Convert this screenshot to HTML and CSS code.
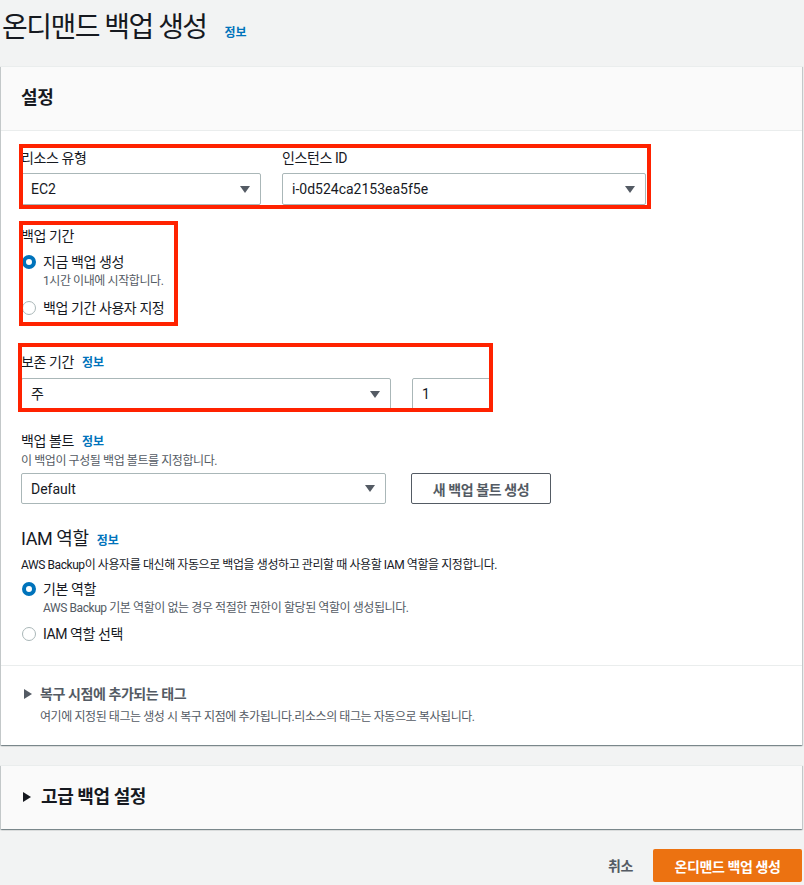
FILE: index.html
```html
<!DOCTYPE html>
<html lang="ko">
<head>
    <meta charset="utf-8">
    <meta name="viewport" content="width=device-width, initial-scale=1">
    <title>온디맨드 백업 생성</title>
    <link rel="stylesheet" href="styles.css">
</head>
<body>
<div class="page">

    <div class="page_header">
        <h1>온디맨드 백업 생성</h1>
        <a class="info" href="#">정보</a>
    </div>

    <div class="panel">
        <div class="panel_header">
            <h2>설정</h2>
        </div>

        <div class="panel_body">
            <div class="field_row">
                <div class="field field-type">
                    <div class="field_label">리소스 유형</div>
                    <div class="select">
                        <span>EC2</span>
                        <svg class="caret" width="10" height="7" viewBox="0 0 10 7"><path d="M0 0h10L5 7z"/></svg>
                    </div>
                </div>
                <div class="field field-instance">
                    <div class="field_label">인스턴스 ID</div>
                    <div class="select">
                        <span>i-0d524ca2153ea5f5e</span>
                        <svg class="caret" width="10" height="7" viewBox="0 0 10 7"><path d="M0 0h10L5 7z"/></svg>
                    </div>
                </div>
            </div>

            <div class="group group-period">
                <div class="field_label">백업 기간</div>
                <div class="radio">
                    <span class="dot checked"></span>
                    <div>
                        <div class="radio_label">지금 백업 생성</div>
                        <div class="radio_desc">1시간 이내에 시작합니다.</div>
                    </div>
                </div>
                <div class="radio radio-next">
                    <span class="dot"></span>
                    <div class="radio_label">백업 기간 사용자 지정</div>
                </div>
            </div>

            <div class="group group-retention">
                <div class="field_label">보존 기간 <a class="info" href="#">정보</a></div>
                <div class="field_row">
                    <div class="select select-unit">
                        <span>주</span>
                        <svg class="caret" width="10" height="7" viewBox="0 0 10 7"><path d="M0 0h10L5 7z"/></svg>
                    </div>
                    <div class="input">1</div>
                </div>
            </div>

            <div class="group group-vault">
                <div class="field_label">백업 볼트 <a class="info" href="#">정보</a></div>
                <div class="field_desc">이 백업이 구성될 백업 볼트를 지정합니다.</div>
                <div class="field_row vault_row">
                    <div class="select select-vault">
                        <span>Default</span>
                        <svg class="caret" width="10" height="7" viewBox="0 0 10 7"><path d="M0 0h10L5 7z"/></svg>
                    </div>
                    <button class="btn">새 백업 볼트 생성</button>
                </div>
            </div>

            <div class="group group-iam">
                <h3>IAM 역할 <a class="info" href="#">정보</a></h3>
                <div class="field_desc">AWS Backup이 사용자를 대신해 자동으로 백업을 생성하고 관리할 때 사용할 IAM 역할을 지정합니다.</div>
                <div class="radio radio-first">
                    <span class="dot checked"></span>
                    <div>
                        <div class="radio_label">기본 역할</div>
                        <div class="radio_desc">AWS Backup 기본 역할이 없는 경우 적절한 권한이 할당된 역할이 생성됩니다.</div>
                    </div>
                </div>
                <div class="radio radio-last">
                    <span class="dot"></span>
                    <div class="radio_label">IAM 역할 선택</div>
                </div>
            </div>

            <!-- highlight boxes drawn over the form -->
            <div class="annot annot-1"></div>
            <div class="annot annot-2"></div>
            <div class="annot annot-3"></div>
        </div>

        <div class="expand">
            <div class="expand_title">
                <svg class="arrow" width="8" height="10" viewBox="0 0 8 10"><path d="M0 0l8 5-8 5z"/></svg>
                복구 시점에 추가되는 태그
            </div>
            <div class="expand_desc">여기에 지정된 태그는 생성 시 복구 지점에 추가됩니다.리소스의 태그는 자동으로 복사됩니다.</div>
        </div>
    </div>

    <div class="panel panel-advanced">
        <div class="panel_header">
            <h2>
                <svg class="arrow" width="8" height="10" viewBox="0 0 8 10"><path d="M0 0l8 5-8 5z"/></svg>
                고급 백업 설정
            </h2>
        </div>
    </div>

    <div class="actions">
        <a class="link_btn" href="#">취소</a>
        <button class="btn btn-primary">온디맨드 백업 생성</button>
    </div>

</div>
</body>
</html>
```

FILE: styles.css
```css
html, body {
    overflow: hidden;
}

body {
    margin: 0;
    font-family: Roboto, "Noto Sans CJK KR", sans-serif;
    font-size: 14px;
    line-height: 22px;
    color: #16191f;
    background-color: #f2f3f3;
    letter-spacing: -0.03em;
}

.page {
    padding: 0 2px 0 1px;
}

.info {
    color: #0073bb;
    font-size: 12px;
    font-weight: 700;
    text-decoration: none;
    letter-spacing: 0;
}

/* title */

.page_header {
    display: flex;
    align-items: baseline;
    gap: 18px;
    padding: 10px 0 20px 1px;
}

.page_header h1 {
    margin: 0;
    font-size: 28px;
    line-height: 36px;
    font-weight: 400;
    letter-spacing: -0.055em;
}

/* panels */

.panel {
    background-color: #fff;
    border-top: 1px solid #eaeded;
    box-shadow: 0 1px 1px 0 rgba(0, 28, 36, 0.3), 1px 1px 1px 0 rgba(0, 28, 36, 0.15), -1px 1px 1px 0 rgba(0, 28, 36, 0.15);
}

.panel_header {
    background-color: #fafafa;
    border-bottom: 1px solid #eaeded;
    padding: 19px 20px 20px;
}

.panel_header h2 {
    margin: 0;
    font-size: 18px;
    line-height: 24px;
    font-weight: 700;
    display: flex;
    align-items: center;
    gap: 10px;
}

.panel_body {
    position: relative;
    padding: 16px 20px 20px;
}

/* fields */

.field_row {
    display: flex;
    gap: 21px;
}

.field_label {
    line-height: 22px;
}

.field_label .info {
    margin-left: 5px;
}

.field_desc {
    font-size: 12px;
    line-height: 16px;
    color: #545b64;
}

.field-type {
    width: 240px;
}

.field-instance {
    width: 364px;
}

.field .select {
    margin-top: 4px;
}

.select,
.input {
    box-sizing: border-box;
    height: 32px;
    border: 1px solid #aab7b8;
    border-radius: 2px;
    background-color: #fff;
    display: flex;
    align-items: center;
    justify-content: space-between;
    padding: 0 10px 0 9px;
    letter-spacing: 0;
}

.caret {
    fill: #545b64;
}

.select-unit {
    width: 370px;
}

.input {
    width: 79px;
}

.select-vault {
    width: 365px;
    height: 31px;
}

.vault_row {
    gap: 25px;
    margin-top: 4px;
}

.btn {
    box-sizing: border-box;
    height: 31px;
    width: 140px;
    border: 1px solid #545b64;
    border-radius: 2px;
    background-color: #fff;
    color: #545b64;
    font-family: inherit;
    font-size: 14px;
    font-weight: 700;
    letter-spacing: -0.03em;
    cursor: pointer;
}

/* groups */

.group-period {
    margin-top: 20px;
}

.group-retention {
    margin-top: 32px;
}

.group-retention .field_row {
    margin-top: 4px;
}

.group-vault {
    margin-top: 20px;
}

.group-iam {
    margin-top: 23px;
}

.group-iam h3 {
    margin: 0;
    font-size: 18px;
    line-height: 24px;
    font-weight: 400;
}

.group-iam h3 .info {
    margin-left: 4px;
}

.group-iam .field_desc {
    margin-top: 4px;
    color: #16191f;
}

/* radios */

.radio {
    display: flex;
    align-items: flex-start;
    gap: 7px;
    margin-top: 4px;
}

.radio-next {
    margin-top: 8px;
}

.radio-first {
    margin-top: 5px;
}

.radio-last {
    margin-top: 7px;
}

.dot {
    box-sizing: border-box;
    flex: none;
    width: 14px;
    height: 14px;
    margin: 4px 0 0 1px;
    border: 1px solid #aab7b8;
    border-radius: 50%;
    background-color: #fff;
}

.dot.checked {
    border: 4px solid #0073bb;
}

.radio_label {
    line-height: 22px;
}

.radio_desc {
    font-size: 12px;
    line-height: 16px;
    color: #545b64;
}

/* highlight boxes */

.annot {
    position: absolute;
    border: 4px solid #ff2200;
}

.annot-1 {
    left: 18px;
    top: 13px;
    width: 624px;
    height: 57px;
}

.annot-2 {
    left: 18px;
    top: 90px;
    width: 151px;
    height: 97px;
}

.annot-3 {
    left: 17px;
    top: 212px;
    width: 467px;
    height: 61px;
}

/* expandable section */

.expand {
    border-top: 1px solid #eaeded;
    padding: 17px 20px 20px;
}

.expand_title {
    display: flex;
    align-items: center;
    gap: 8px;
    font-weight: 700;
    color: #545b64;
    padding-left: 3px;
}

.arrow {
    fill: #16191f;
}

.expand .arrow {
    fill: #545b64;
}

.expand_desc {
    margin-top: 4px;
    padding-left: 19px;
    font-size: 12px;
    line-height: 16px;
    color: #545b64;
}

.panel-advanced {
    margin-top: 20px;
    background-color: #fafafa;
}

.panel-advanced .panel_header {
    border-bottom: none;
    padding-left: 22px;
}

/* footer */

.actions {
    display: flex;
    justify-content: flex-end;
    align-items: center;
    gap: 20px;
    margin-top: 20px;
}

.link_btn {
    color: #545b64;
    font-weight: 700;
    text-decoration: none;
}

.btn-primary {
    width: 149px;
    height: 33px;
    border: none;
    background-color: #ec7211;
    color: #fff;
}
```
